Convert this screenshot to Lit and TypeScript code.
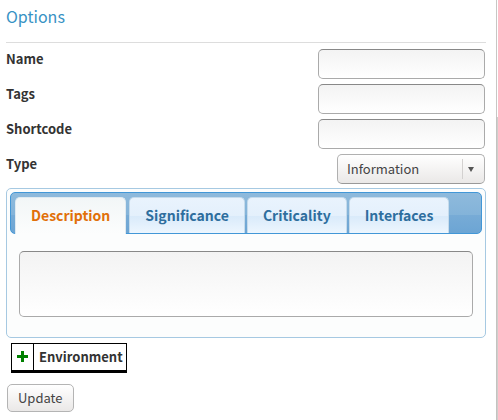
import { LitElement, html, css } from "lit";
import { customElement, state } from "lit/decorators.js";

const FIELDS = [
  { id: "name", label: "Name" },
  { id: "tags", label: "Tags" },
  { id: "shortcode", label: "Shortcode" },
];

const TABS = ["Description", "Significance", "Criticality", "Interfaces"];

@customElement("app-root")
export class AppRoot extends LitElement {
  @state() private active = 0;

  static styles = css`
    :host {
      display: block;
      min-height: 100vh;
      box-sizing: border-box;
      background: #fff;
      color: #333;
      font-family: "Noto Sans CJK SC", "Noto Sans", sans-serif;
      font-size: 13px;
      line-height: 20px;
    }
    * {
      box-sizing: border-box;
    }
    .page {
      display: flex;
      min-height: 100vh;
    }
    form {
      flex: 1;
      min-width: 0;
      padding: 0 10px 8px 6px;
    }
    .scrollbar {
      display: flex;
      flex-direction: column;
      width: 2px;
    }
    .thumb {
      flex: 117;
      border-left: 1px solid #c8c6c4;
    }
    .track {
      flex: 303;
      background: #d0cecc;
      border-left: 1px solid #c4c2c0;
    }
    h1 {
      margin: 0 0 6px;
      padding: 4px 0 14px;
      border-bottom: 1px solid #ddd;
      color: #3792c4;
      font-size: 16px;
      font-weight: 400;
      line-height: 24px;
    }
    .row {
      display: flex;
      justify-content: space-between;
      align-items: flex-start;
      height: 35px;
      padding-right: 1px;
    }
    label,
    .env {
      font-size: 13px;
      font-weight: 700;
    }
    input,
    textarea,
    select,
    button {
      font: inherit;
      color: #444;
      margin: 0;
    }
    input,
    textarea {
      border: 1px solid #aaa;
      border-top-color: #888;
      border-radius: 5px;
      background: linear-gradient(#f3f3f3, #fff);
    }
    input {
      width: 167px;
      height: 30px;
      padding: 0 8px;
    }
    .select {
      position: relative;
      width: 148px;
    }
    select {
      appearance: none;
      width: 100%;
      height: 30px;
      padding: 0 24px 0 9px;
      border: 1px solid #b0b0b0;
      border-bottom-color: #999;
      border-radius: 5px;
      background: linear-gradient(#fff, #eae8e7);
    }
    .arrow {
      position: absolute;
      top: 5px;
      right: 1px;
      width: 22px;
      height: 20px;
      border-left: 1px solid #d3d1d0;
      pointer-events: none;
    }
    .tabs {
      padding: 3px 3px 20px;
      border: 1px solid #a6c9e2;
      border-radius: 5px;
      background: #fcfdfd;
      margin-top: -1px;
    }
    .bar {
      display: flex;
      gap: 2px;
      height: 42px;
      padding: 4px 4px 0;
      border: 1px solid #4297d7;
      border-radius: 5px;
      background: linear-gradient(#8ebadc, #83b3d9 56%, #77abd6 56%, #6ca5d4);
    }
    .tab {
      height: 36px;
      padding: 0 15px 2px;
      border: 1px solid #c5dbec;
      border-bottom: 0;
      border-radius: 5px 5px 0 0;
      background: linear-gradient(#e9f3fd, #e4f0fc 50%, #d9eafa 52%, #edf6fe);
      color: #2e6e9e;
      font-size: 14px;
      font-weight: 700;
    }
    .tab.active {
      height: 37px;
      margin-right: 1px;
      padding-bottom: 3px;
      border-color: #dfeaf1;
      background: linear-gradient(#f2f6f7, #fcfdfd);
      color: #e17009;
    }
    .panel {
      padding: 17px 9px 0;
    }
    textarea {
      display: block;
      width: 100%;
      height: 66px;
      padding: 6px 8px;
      resize: none;
    }
    .env {
      display: inline-flex;
      margin: 5px 0 11px 5px;
      padding: 0;
      height: 30px;
      border: 1px solid #000;
      border-bottom-width: 3px;
      border-radius: 0;
      background: #fff;
      color: #333;
    }
    .plus {
      display: flex;
      align-items: center;
      justify-content: center;
      width: 22px;
      height: 26px;
      border-right: 1px solid #000;
    }
    .envname {
      padding: 0 3px 0 5px;
      line-height: 26px;
    }
    .update {
      display: block;
      height: 28px;
      margin-left: 1px;
      padding: 0 10px;
      border: 1px solid #b4b4b4;
      border-radius: 5px;
      background: linear-gradient(#fff, #eae8e7);
    }
  `;

  render() {
    return html`
      <div class="page">
        <form @submit=${(e: Event) => e.preventDefault()}>
          <h1>Options</h1>
          ${FIELDS.map(
            (f) => html`<div class="row">
              <label for=${f.id}>${f.label}</label>
              <input id=${f.id} type="text" />
            </div>`
          )}
          <div class="row">
            <label for="type">Type</label>
            <div class="select">
              <select id="type">
                <option>Information</option>
              </select>
              <svg class="arrow" viewBox="0 0 21 20" aria-hidden="true">
                <path d="M5 8H11L8 13Z" fill="#555" />
              </svg>
            </div>
          </div>
          <section class="tabs">
            <div class="bar" role="tablist">
              ${TABS.map(
                (t, i) => html`<button
                  type="button"
                  role="tab"
                  class="tab ${i === this.active ? "active" : ""}"
                  aria-selected=${i === this.active}
                  @click=${() => (this.active = i)}
                >${t}</button>`
              )}
            </div>
            <div class="panel" role="tabpanel">
              <textarea aria-label=${TABS[this.active]}></textarea>
            </div>
          </section>
          <button type="button" class="env">
            <span class="plus">
              <svg width="13" height="12" viewBox="0 0 13 12" aria-hidden="true">
                <path d="M5 0H8V4H12V7H8V11H5V7H1V4H5Z" fill="#008000" />
              </svg>
            </span>
            <span class="envname">Environment</span>
          </button>
          <button type="submit" class="update">Update</button>
        </form>
        <div class="scrollbar"><div class="thumb"></div><div class="track"></div></div>
      </div>
    `;
  }
}
